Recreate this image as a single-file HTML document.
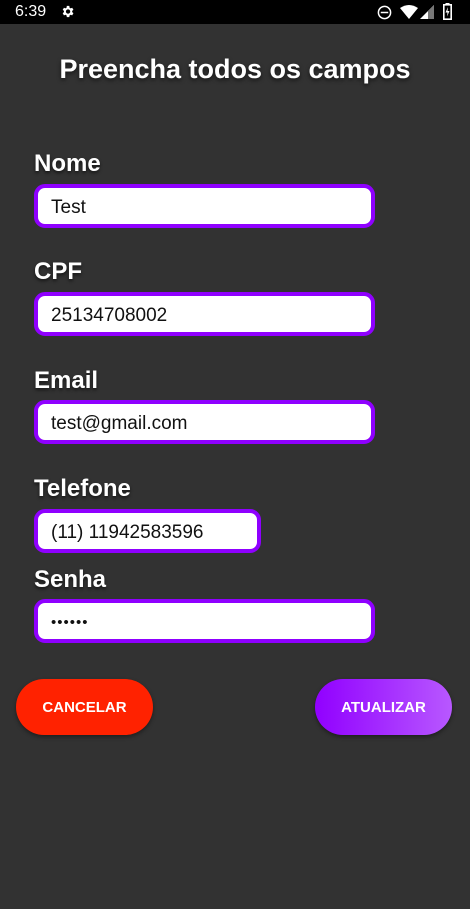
<!DOCTYPE html>
<html><head><meta charset="utf-8"><style>
*{margin:0;padding:0;box-sizing:border-box}
body{width:470px;height:909px;background:#323232;font-family:"Liberation Sans",Roboto,sans-serif;position:relative;overflow:hidden}
.sb{position:absolute;left:0;top:0;width:470px;height:24px;background:#000;color:#fff;font-size:16px}
.t{position:absolute;left:0;width:470px;top:54px;text-align:center;color:#fff;font-weight:bold;font-size:27px;text-shadow:0 2px 4px rgba(0,0,0,.6)}
.l{position:absolute;left:34px;color:#fff;font-weight:bold;font-size:24px;text-shadow:0 2px 3px rgba(0,0,0,.6)}
.i{position:absolute;left:34px;width:341px;height:44px;background:#fff;border:4px solid #8f00ff;border-radius:11px;font-size:19px;color:#111;padding-left:13px;line-height:40px}
.b{position:absolute;top:679px;width:137px;height:56px;border-radius:28px;color:#fff;font-weight:bold;font-size:15px;text-align:center;line-height:57px;box-shadow:0 2px 4px rgba(0,0,0,.4)}
</style></head><body>
<div class="sb">
<span style="position:absolute;left:15px;top:3px">6:39</span>
<svg style="position:absolute;left:60px;top:4px" width="15" height="15" viewBox="0 0 24 24"><path fill="#fff" d="M19.4 13a7.5 7.5 0 000-2l2.1-1.6-2-3.5-2.5 1a7 7 0 00-1.7-1L14.9 3h-4l-.4 2.9a7 7 0 00-1.7 1l-2.5-1-2 3.5L6.4 11a7.5 7.5 0 000 2l-2.1 1.6 2 3.5 2.5-1a7 7 0 001.7 1l.4 2.9h4l.4-2.9a7 7 0 001.7-1l2.5 1 2-3.5zM12.9 15.5a3.5 3.5 0 110-7 3.5 3.5 0 010 7z"/></svg>
<svg style="position:absolute;left:377px;top:5px" width="15" height="15" viewBox="0 0 16 16"><circle cx="8" cy="8" r="6.5" fill="none" stroke="#fff" stroke-width="1.6"/><rect x="4" y="7.2" width="8" height="1.6" fill="#fff"/></svg>
<svg style="position:absolute;left:400px;top:5px" width="18" height="14" viewBox="0 0 18 14"><path fill="#fff" d="M0 3Q9-3 18 3L9 14z"/></svg>
<svg style="position:absolute;left:420px;top:5px" width="14" height="14" viewBox="0 0 14 14"><path fill="#fff" d="M14 0V14H0z"/><path fill="#777" d="M14 0V14H8V6z"/></svg>
<svg style="position:absolute;left:443px;top:3px" width="9" height="17" viewBox="0 0 9 17"><rect x="2.5" y="0" width="4" height="2" fill="#fff"/><rect x="0.8" y="1.8" width="7.4" height="14.4" fill="none" stroke="#fff" stroke-width="1.6"/><path fill="#fff" d="M5 4L2.5 9.5H4.5L4 13.5L6.5 8H4.5z"/></svg>
</div>
<div class="t">Preencha todos os campos</div>
<div class="l" style="top:150px">Nome</div>
<div class="i" style="top:184px">Test</div>
<div class="l" style="top:258px">CPF</div>
<div class="i" style="top:292px">25134708002</div>
<div class="l" style="top:367px">Email</div>
<div class="i" style="top:400px">test@gmail.com</div>
<div class="l" style="top:475px">Telefone</div>
<div class="i" style="top:509px;width:227px">(11) 11942583596</div>
<div class="l" style="top:566px">Senha</div>
<div class="i" style="top:599px;font-size:15px;letter-spacing:1px">••••••</div>
<div class="b" style="left:16px;background:#ff2200">CANCELAR</div>
<div class="b" style="left:315px;background:linear-gradient(90deg,#9100ff,#b858ff)">ATUALIZAR</div>
</body></html>
